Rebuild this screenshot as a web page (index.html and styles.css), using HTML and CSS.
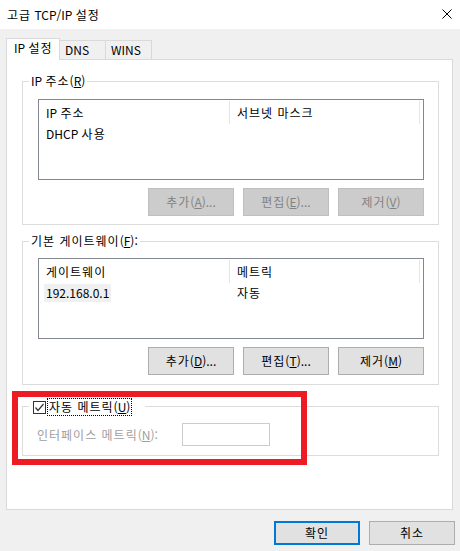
FILE: index.html
```html
<!DOCTYPE html>
<html lang="ko">
<head>
<meta charset="utf-8">
<title>고급 TCP/IP 설정</title>
<link rel="stylesheet" href="styles.css">
</head>
<body>
<div class="titlebar">
  <span class="title"><span class="k">고급</span> TCP/IP <span class="k">설정</span></span>
  <svg class="close" width="10" height="10" viewBox="0 0 10 10"><path d="M0.5 0.5 L9.5 9.5 M9.5 0.5 L0.5 9.5" stroke="#000" stroke-width="1" fill="none"/></svg>
</div>
<div class="tabs">
  <div class="tab active">IP <span class="k">설정</span></div>
  <div class="tab">DNS</div>
  <div class="tab">WINS</div>
</div>
<div class="panel">
  <fieldset class="group g1">
    <legend class="glegend">IP <span class="k">주소</span>(<u>R</u>)</legend>
    <div class="gbody gb1">
      <div class="list">
        <div class="lhead">
          <div class="hcell">IP <span class="k">주소</span></div>
          <div class="hcell"><span class="k">서브넷 마스크</span></div>
        </div>
        <div class="lrow">
          <div class="cell"><span class="ctext">DHCP <span class="k">사용</span></span></div>
        </div>
      </div>
      <div class="btnrow">
        <button class="btn disabled"><span class="k">추가</span>(<u>A</u>)...</button>
        <button class="btn disabled"><span class="k">편집</span>(<u>E</u>)...</button>
        <button class="btn disabled"><span class="k">제거</span>(<u>V</u>)</button>
      </div>
    </div>
  </fieldset>
  <fieldset class="group g2">
    <legend class="glegend"><span class="k">기본 게이트웨이</span>(<u>F</u>):</legend>
    <div class="gbody gb2">
      <div class="list">
        <div class="lhead">
          <div class="hcell"><span class="k">게이트웨이</span></div>
          <div class="hcell"><span class="k">메트릭</span></div>
        </div>
        <div class="lrow">
          <div class="cell"><span class="ctext sel">192.168.0.1</span></div>
          <div class="cell"><span class="ctext k">자동</span></div>
        </div>
      </div>
      <div class="btnrow">
        <button class="btn"><span class="k">추가</span>(<u>D</u>)...</button>
        <button class="btn"><span class="k">편집</span>(<u>T</u>)...</button>
        <button class="btn"><span class="k">제거</span>(<u>M</u>)</button>
      </div>
    </div>
  </fieldset>
  <fieldset class="group g3">
    <legend class="glegend chklegend">
      <span class="chk"><svg width="11" height="11" viewBox="0 0 11 11"><polyline points="1.5,5.5 4,8.5 9.5,2" stroke="#333" stroke-width="1.2" fill="none"/></svg></span><span class="chklabel"><span class="k">자동 메트릭</span>(<u>U</u>)</span>
    </legend>
    <div class="gbody gb3">
      <span class="dlabel"><span class="k">인터페이스 메트릭</span>(<u>N</u>):</span>
      <span class="dinput"></span>
    </div>
  </fieldset>
</div>
<div class="footer">
  <button class="btn fbtn default"><span class="k">확인</span></button>
  <button class="btn fbtn"><span class="k">취소</span></button>
</div>
<div class="highlight"></div>
</body>
</html>
```
FILE: styles.css
```css
* { box-sizing: border-box; }
html, body { margin: 0; padding: 0; }
body {
  width: 460px;
  height: 551px;
  background: #f0f0f0;
  font-family: "Noto Sans CJK KR", "Malgun Gothic", "Noto Sans", sans-serif;
  font-size: 12px;
  line-height: 16px;
  color: #000;
  position: relative;
  overflow: hidden;
}
u { text-decoration: underline; text-underline-offset: 1px; }
.k { letter-spacing: 1px; }

.titlebar {
  height: 29px;
  background: #fff;
  display: flex;
  align-items: center;
  justify-content: space-between;
  padding: 0 8px 0 7px;
}
.title { font-size: 12px; }
.close { display: block; margin-top: -1px; }

.tabs {
  display: flex;
  align-items: flex-end;
  margin: 9px 0 0 6px;
  height: 22px;
  position: relative;
  z-index: 1;
}
.tab {
  height: 19px;
  width: 46px;
  margin-bottom: 1px;
  background: #f0f0f0;
  border-top: 1px solid #d9d9d9;
  border-right: 1px solid #d9d9d9;
  padding-left: 5px;
  line-height: 17px;
}
.tab.active {
  height: 22px;
  width: 54px;
  margin-bottom: 0;
  background: #fff;
  border-left: 1px solid #d9d9d9;
  padding-left: 7px;
  line-height: 18px;
}

.panel {
  margin: -1px 0 0 6px;
  width: 447px;
  height: 451px;
  background: #fff;
  border: 1px solid #d9d9d9;
  padding-top: 13px;
}

.group {
  margin: 0 0 0 15px;
  padding: 0;
  width: 417px;
  min-width: 0;
  border: 1px solid #dcdcdc;
}
.g2 { margin-top: 8px; }
.g3 { margin-top: 13px; }
.glegend {
  margin-left: 6px;
  padding: 0 2px;
  line-height: 16px;
  height: 16px;
}
.gbody { padding: 10px 14px 8px 15px; }
.gb2 { padding-top: 9px; padding-bottom: 9px; }

.list {
  width: 386px;
  height: 81px;
  border: 1px solid #828790;
  background: #fff;
}
.lhead { display: flex; height: 24px; }
.hcell {
  width: 190px;
  height: 23px;
  border-right: 1px solid #e5e5e5;
  padding-left: 7px;
  line-height: 24px;
  margin-top: 1px;
}
.hcell:first-child { width: 191px; }
.lrow { display: flex; height: 18px; margin-top: 1px; }
.cell { width: 191px; padding-left: 5px; }
.cell + .cell { width: 190px; padding-left: 7px; }
.ctext { display: inline-block; height: 18px; line-height: 18px; padding: 0 2px; }
.cell + .cell .ctext { padding: 0; }
.ctext.sel { background: #f0f0f0; }

.btnrow {
  display: flex;
  justify-content: flex-end;
  gap: 9px;
  margin-top: 8px;
}
.btn {
  width: 86px;
  height: 28px;
  margin: 0;
  padding: 0;
  font-family: inherit;
  font-size: 12px;
  line-height: 16px;
  color: #000;
  background: #e1e1e1;
  border: 1px solid #adadad;
  border-radius: 0;
  text-align: center;
}
.btn.disabled {
  background: #cccccc;
  border-color: #bfbfbf;
  color: #838383;
}

.chklegend {
  display: flex;
  align-items: center;
  padding: 0 14px 0 4px;
}
.chk {
  width: 13px;
  height: 13px;
  border: 1px solid #333;
  background: #fff;
  display: flex;
  align-items: center;
  justify-content: center;
  margin-top: 2px;
}
.chk svg { display: block; }
.chklabel {
  margin-left: 2px;
  padding: 0 1px;
  outline: 1px dotted #000;
  outline-offset: 0;
  line-height: 15px;
  height: 16px;
  margin-top: 1px;
}
.gb3 {
  display: flex;
  align-items: center;
  padding: 9px 14px 9px 14px;
}
.dlabel { width: 145px; color: #a0a0a0; }
.dinput {
  width: 88px;
  height: 23px;
  border: 1px solid #cccccc;
  background: #fff;
}

.footer {
  display: flex;
  justify-content: flex-end;
  gap: 9px;
  margin-top: 11px;
  padding-right: 5px;
}
.fbtn { height: 24px; }
.fbtn.default { border: 2px solid #0078d7; }

.highlight {
  position: absolute;
  left: 12px;
  top: 391px;
  width: 295px;
  height: 74px;
  border: 6px solid #ed1c24;
}
```
